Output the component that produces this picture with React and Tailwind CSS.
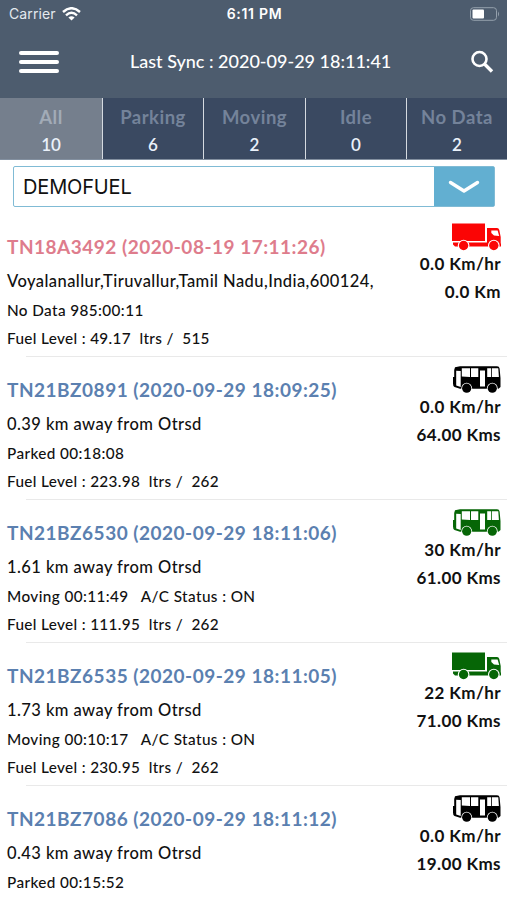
const tabs = [
  ["All", "10"],
  ["Parking", "6"],
  ["Moving", "2"],
  ["Idle", "0"],
  ["No Data", "2"],
];

const vehicles = [
  { title: "TN18A3492 (2020-08-19 17:11:26)", tone: "text-[#de7c8c]", place: "Voyalanallur,Tiruvallur,Tamil Nadu,India,600124,", status: "No Data 985:00:11", fuel: "Fuel Level : 49.17  ltrs /  515", icon: "truck", color: "text-[#fb0505]", speed: "0.0 Km/hr", dist: "0.0 Km" },
  { title: "TN21BZ0891 (2020-09-29 18:09:25)", tone: "text-[#5b80b0]", place: "0.39 km away from Otrsd", status: "Parked 00:18:08", fuel: "Fuel Level : 223.98  ltrs /  262", icon: "bus", color: "text-black", speed: "0.0 Km/hr", dist: "64.00 Kms" },
  { title: "TN21BZ6530 (2020-09-29 18:11:06)", tone: "text-[#5b80b0]", place: "1.61 km away from Otrsd", status: "Moving 00:11:49   A/C Status : ON", fuel: "Fuel Level : 111.95  ltrs /  262", icon: "bus", color: "text-[#066606]", speed: "30 Km/hr", dist: "61.00 Kms" },
  { title: "TN21BZ6535 (2020-09-29 18:11:05)", tone: "text-[#5b80b0]", place: "1.73 km away from Otrsd", status: "Moving 00:10:17   A/C Status : ON", fuel: "Fuel Level : 230.95  ltrs /  262", icon: "truck", color: "text-[#066606]", speed: "22 Km/hr", dist: "71.00 Kms" },
  { title: "TN21BZ7086 (2020-09-29 18:11:12)", tone: "text-[#5b80b0]", place: "0.43 km away from Otrsd", status: "Parked 00:15:52", icon: "bus", color: "text-black", speed: "0.0 Km/hr", dist: "19.00 Kms" },
];

function Truck() {
  return (
    <svg width="49" height="28" viewBox="0 0 49 28" fill="currentColor">
      <path d="M0 0.500H33V18H0Z" />
      <path d="M1 19.500H35V5H45Q46.800 5 47.300 7L48.700 14V20.500H49V23.500H3L1 21.500Z" />
      <path d="M39.300 7.500H45.600L47.200 13L42 12.400L39.300 10Z" fill="white" />
      <circle cx="11.600" cy="22.500" r="5.800" fill="white" />
      <circle cx="41.800" cy="22.500" r="5.800" fill="white" />
      <circle cx="11.600" cy="22.500" r="4.700" />
      <circle cx="41.800" cy="22.500" r="4.700" />
    </svg>
  );
}

function Bus() {
  return (
    <svg width="49" height="28" viewBox="0 0 49 28" fill="currentColor">
      <path d="M3 1.200L8 0.300H45Q47.300 0.300 47.600 2.500L48.500 12V21L46.500 22.700H8L2.500 21Q1 20.500 1 17.500V11H2.200V4Z" />
      <path d="M4.200 4.800L8.700 5V21L4.200 19.500ZM9.800 2.300H18V11L9.800 10.600ZM19 2.300H26.300V11H19ZM28 4.500H33V20.500H28ZM35.200 2.300H39.200V11H35.200ZM40 2.300H46.300L46.900 11H40Z" fill="white" />
      <circle cx="14.700" cy="22.200" r="5.400" fill="white" />
      <circle cx="40.300" cy="22.200" r="5.400" fill="white" />
      <circle cx="14.700" cy="22.200" r="4.600" />
      <circle cx="40.300" cy="22.200" r="4.600" />
    </svg>
  );
}

function Vehicle({ v }) {
  return (
    <section className="flex h-[143px] shrink-0 flex-col whitespace-pre text-[#111]">
      <div className="flex flex-1 justify-between pr-1.5 pl-[7px]">
        <div className="w-[380px] pt-[19px]">
          <h2 className={`text-[19px] leading-[28px] font-bold tracking-[0.5px] ${v.tone}`}>{v.title}</h2>
          <p className="mt-[6px] text-[16.5px] leading-[28px] font-medium tracking-[0.43px]">{v.place}</p>
          <p className="mt-px text-[15.3px] leading-[28px] font-medium tracking-[0.4px]">{v.status}</p>
          {v.fuel && <p className="text-[15.3px] leading-[29px] font-medium tracking-[0.35px]">{v.fuel}</p>}
        </div>
        <div className="flex flex-col items-end pt-[9px] text-[17px] font-bold tracking-[0.4px]">
          <div className={v.color}>{v.icon === "truck" ? <Truck /> : <Bus />}</div>
          <p className="mt-[-1px] leading-[28px]">{v.speed}</p>
          <p className="leading-[28px]">{v.dist}</p>
        </div>
      </div>
      <div className="ml-[26px] h-px bg-[#e9e9e9]" />
    </section>
  );
}

export default function App() {
  return (
    <main className="flex h-[900px] w-[507px] flex-col overflow-hidden bg-white font-['Lato',sans-serif]">
      <header className="h-[98px] shrink-0 bg-[#4d5c6e] text-white">
        <div className="grid h-[27px] grid-cols-[1fr_auto_1fr] items-center pr-[7px] pl-[9px] font-['Inter',sans-serif]">
          <div className="flex items-center gap-[6px] text-[14px] text-[#e4e9ee]">
            <span className="tracking-[0.1px]">Carrier</span>
            <svg width="19" height="14" viewBox="0 0 19 14" fill="none" stroke="white" strokeWidth="2.4">
              <path d="M1 5Q9.500 -2.600 18 5" />
              <path d="M4 8.300Q9.500 3.300 15 8.300" />
              <path d="M9.500 13.500L6.400 10.600Q9.500 8 12.600 10.600Z" fill="white" stroke="none" />
            </svg>
          </div>
          <span className="text-center text-[14px] font-semibold tracking-[0.7px]">6:11 PM</span>
          <svg className="justify-self-end" width="31" height="14" viewBox="0 0 31 14">
            <rect x="1.500" y="0.700" width="26" height="12.600" rx="3" fill="none" stroke="#94a0ac" />
            <rect x="3.500" y="2.500" width="11.500" height="9" rx="1" fill="white" />
            <path d="M29 4.500Q31 7 29 9.500Z" fill="#94a0ac" />
          </svg>
        </div>
        <div className="flex h-[70px] items-center pr-[13px] pl-[19px]">
          <div className="flex w-10 flex-col gap-[5px]">
            <div className="h-1 rounded-xs bg-white" />
            <div className="h-1 rounded-xs bg-white" />
            <div className="h-1 rounded-xs bg-white" />
          </div>
          <h1 className="ml-[71px] flex-1 pb-px text-[18px] font-medium whitespace-nowrap">Last Sync : 2020-09-29 18:11:41</h1>
          <svg width="24" height="24" viewBox="0 0 24 24" fill="none" stroke="white">
            <circle cx="9.500" cy="9" r="7" strokeWidth="2.600" />
            <path d="M14.500 14L22 21.500" strokeWidth="3.400" />
          </svg>
        </div>
      </header>
      <nav className="grid h-[62px] shrink-0 grid-cols-[103px_101px_102px_101px_100px] border-b border-[#8390a0] bg-[#3a4961] text-center">
        {tabs.map(([name, count], i) => (
          <div key={name} className={i === 0 ? "border-r-[1.5px] border-[#d5dae0] bg-[#757f8d] pt-[6px]" : i < 4 ? "border-r-[1.5px] border-[#d5dae0] pt-[6px]" : "pt-[6px]"}>
            <div className={i === 0 ? "text-[18.5px] leading-[27px] font-bold tracking-[0.5px] text-[#a2abb7]" : "text-[18.5px] leading-[27px] font-bold tracking-[0.5px] text-[#74839a]"}>{name}</div>
            <div className="text-[17px] leading-[28px] font-semibold text-[#eaf1fa]">{count}</div>
          </div>
        ))}
      </nav>
      <div className="mx-[13px] mt-[6px] flex h-[41px] w-[482px] shrink-0 rounded-xs border border-[#80bbd5]">
        <div className="flex flex-1 items-center pt-px pl-[9px] font-['Inter',sans-serif] text-[20px] tracking-[-0.15px] text-[#111]">DEMOFUEL</div>
        <div className="flex w-[60px] items-center justify-center bg-[#62afd1]">
          <svg width="32" height="14" viewBox="0 0 32 14" fill="none" stroke="white" strokeWidth="3.400" strokeLinecap="round" strokeLinejoin="round">
            <path d="M2.500 2.500L16 11L29.500 2.500" />
          </svg>
        </div>
      </div>
      <div className="mt-[7px] flex flex-col">
        {vehicles.map((v) => <Vehicle key={v.title} v={v} />)}
      </div>
    </main>
  );
}
